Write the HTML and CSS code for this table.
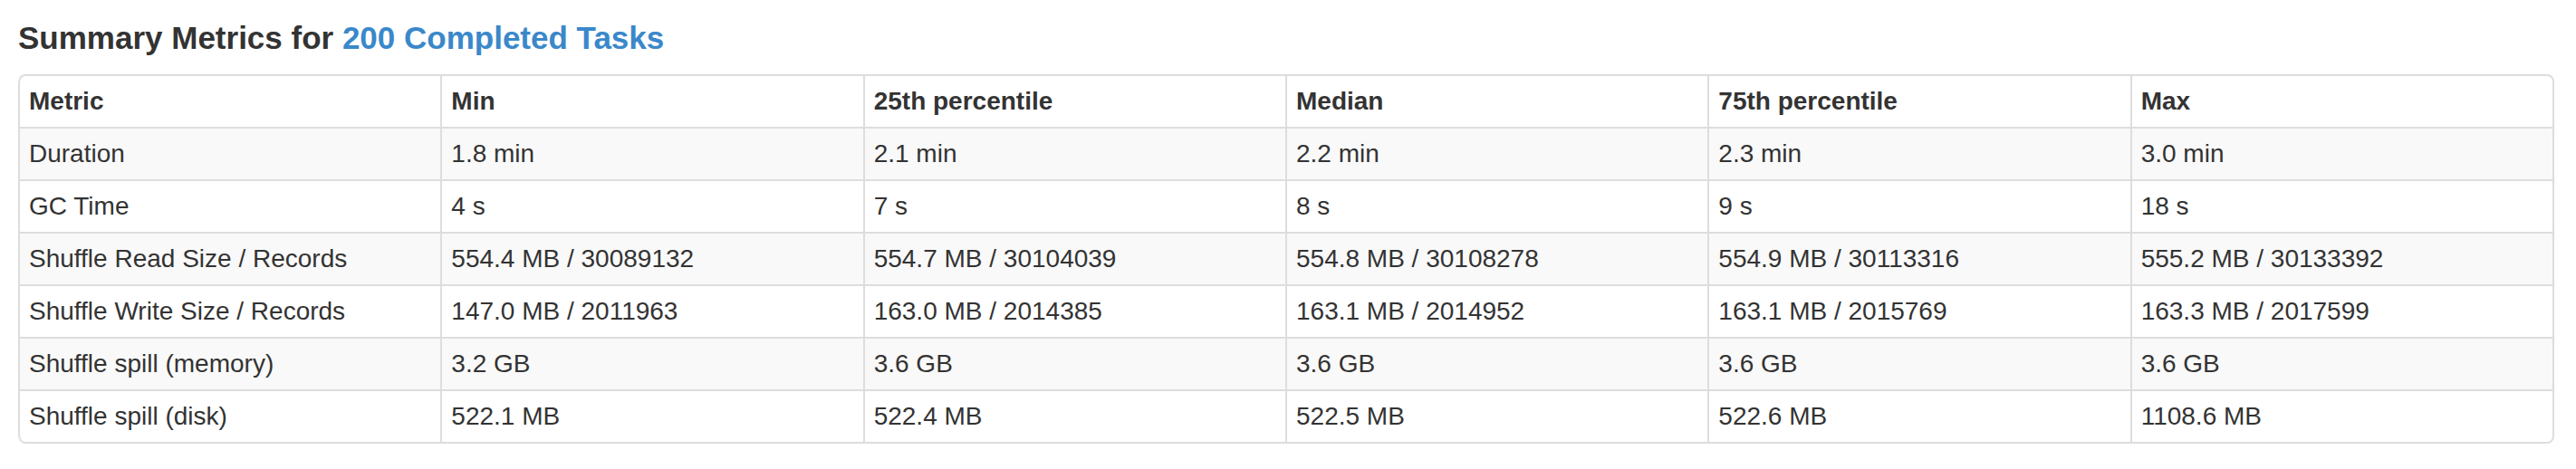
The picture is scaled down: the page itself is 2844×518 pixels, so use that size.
FILE: index.html
```html
<!DOCTYPE html>
<html>
<head>
<meta charset="utf-8">
<link rel="stylesheet" href="styles.css">
</head>
<body>
<div class="page">
  <h4 class="title">Summary Metrics for <a class="link" href="#">200 Completed Tasks</a></h4>
  <table class="metrics">
    <thead>
      <tr><th>Metric</th><th>Min</th><th>25th percentile</th><th>Median</th><th>75th percentile</th><th>Max</th></tr>
    </thead>
    <tbody>
      <tr><td>Duration</td><td>1.8 min</td><td>2.1 min</td><td>2.2 min</td><td>2.3 min</td><td>3.0 min</td></tr>
      <tr><td>GC Time</td><td>4 s</td><td>7 s</td><td>8 s</td><td>9 s</td><td>18 s</td></tr>
      <tr><td>Shuffle Read Size / Records</td><td>554.4 MB / 30089132</td><td>554.7 MB / 30104039</td><td>554.8 MB / 30108278</td><td>554.9 MB / 30113316</td><td>555.2 MB / 30133392</td></tr>
      <tr><td>Shuffle Write Size / Records</td><td>147.0 MB / 2011963</td><td>163.0 MB / 2014385</td><td>163.1 MB / 2014952</td><td>163.1 MB / 2015769</td><td>163.3 MB / 2017599</td></tr>
      <tr><td>Shuffle spill (memory)</td><td>3.2 GB</td><td>3.6 GB</td><td>3.6 GB</td><td>3.6 GB</td><td>3.6 GB</td></tr>
      <tr><td>Shuffle spill (disk)</td><td>522.1 MB</td><td>522.4 MB</td><td>522.5 MB</td><td>522.6 MB</td><td>1108.6 MB</td></tr>
    </tbody>
  </table>
</div>
</body>
</html>
```
FILE: styles.css
```css
html, body {
  margin: 0;
  padding: 0;
  background: #ffffff;
}

body {
  font-family: "Liberation Sans", Arial, Helvetica, sans-serif;
  color: #333333;
  font-size: 28px;
  line-height: 40px;
}

.page {
  padding: 0 24px 0 20px;
}

.title {
  margin: 22px 0 20px 0;
  font-size: 35px;
  line-height: 40px;
  font-weight: bold;
  color: #333333;
}

.link {
  color: #3a88ca;
  text-decoration: none;
}

.metrics {
  width: 2800px;
  table-layout: fixed;
  border-collapse: separate;
  border-spacing: 0;
  border: 2px solid #dddddd;
  border-left: 0;
  border-radius: 8px;
}

.metrics th,
.metrics td {
  padding: 8px 10px;
  line-height: 40px;
  text-align: left;
  vertical-align: top;
  border-left: 2px solid #dddddd;
  border-top: 2px solid #dddddd;
  white-space: nowrap;
  overflow: hidden;
}

.metrics thead tr:first-child th {
  border-top: 0;
}

.metrics th {
  font-weight: bold;
}

.metrics thead tr:first-child th:first-child {
  border-top-left-radius: 8px;
}

.metrics thead tr:first-child th:last-child {
  border-top-right-radius: 8px;
}

.metrics tbody tr:last-child td:first-child {
  border-bottom-left-radius: 8px;
}

.metrics tbody tr:last-child td:last-child {
  border-bottom-right-radius: 8px;
}

.metrics tbody tr:nth-child(odd) td {
  background: #f9f9f9;
}
```
